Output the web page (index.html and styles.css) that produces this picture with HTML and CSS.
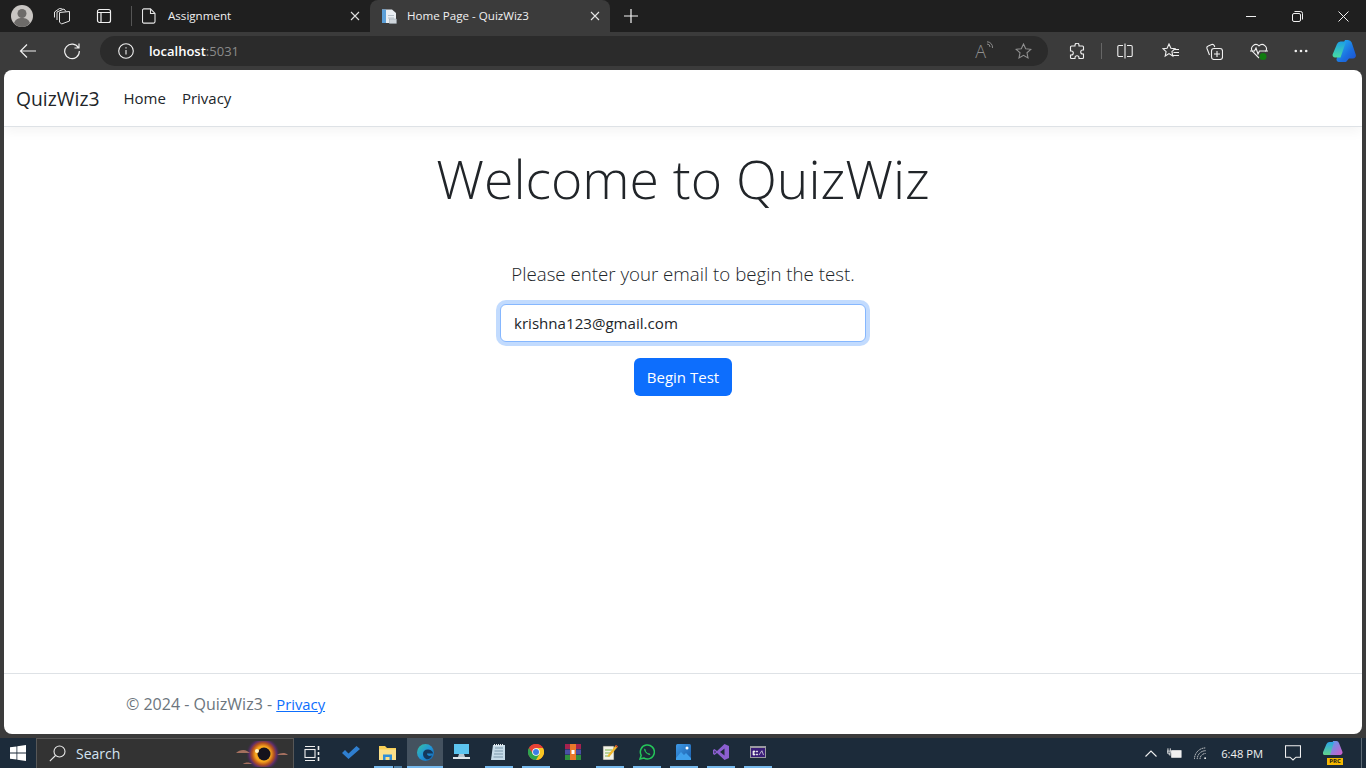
FILE: index.html
```html
<!DOCTYPE html>
<html lang="en">
  <head>
    <meta charset="UTF-8" />
    <meta name="viewport" content="width=device-width, initial-scale=1.0" />
    <title>Home Page - QuizWiz3</title>
    <link rel="stylesheet" href="styles.css">
  </head>
  <body>
    <div class="tab-strip">
      <div class="avatar">
        <svg width="22" height="22" viewBox="0 0 22 22"><circle cx="11" cy="11" r="11" fill="#c9c6c3"/><circle cx="11" cy="8.5" r="4.5" fill="#6d6b69"/><path d="M3 18c1.500-4 4.500-5 8-5s6.500 1 8 5c-2 2.500-5 4-8 4s-6-1.500-8-4z" fill="#6d6b69"/></svg>
      </div>
      <div class="strip-icon workspace">
        <svg width="18" height="18" viewBox="0 0 18 18" fill="none" stroke="#e6e6e6"><path d="M6.500 5.500l10-1v9.500l-8 3-2-2zM4 13V5l7-3 2 2.500M1.500 10.500V5l5-3.500 3 .5"/></svg>
      </div>
      <div class="strip-icon tab-actions">
        <svg width="16" height="16" viewBox="0 0 16 16" fill="none" stroke="#f0f0f0" stroke-width="1.200"><rect x="1.500" y="1.500" width="13" height="13" rx="2"/><path d="M1.500 4.500h13M5 4.500v10" /></svg>
      </div>
      <div class="strip-divider"></div>
      <div class="tab">
        <svg class="tab-page" width="14" height="16" viewBox="0 0 14 16" fill="none" stroke="#e6e6e6" stroke-width="1.100"><path d="M1.500.9h7l4.500 4.500v8.200a1.500 1.500 0 0 1-1.500 1.500h-10a1.500 1.500 0 0 1-1-1.500V2.400A1.500 1.500 0 0 1 1.500.9zM8.500 1v4.500H13"/></svg>
        <span class="tab-title">Assignment</span>
        <svg class="tab-close" width="10" height="10" viewBox="0 0 10 10" stroke="#e0e0e0" stroke-width="1.100"><path d="M1 1l8 8M9 1l-8 8"/></svg>
      </div>
      <div class="tab tab-active">
        <svg class="tab-fav" width="16" height="16" viewBox="0 0 16 16"><path d="M1 1.500h10l4 3.500v10H1z" fill="#e9eef3"/><path d="M1 1.500h4v13.500H1z" fill="#5b9fd8"/><path d="M7 7h6v1H7zM7 9.500h6v1H7z" fill="#b5c0ca"/><rect x="8.500" y="11" width="7" height="4.500" fill="#cfd6dc" stroke="#98a2ab" stroke-width=".5"/></svg>
        <span class="tab-title">Home Page - QuizWiz3</span>
        <svg class="tab-close" width="10" height="10" viewBox="0 0 10 10" stroke="#e6e6e6" stroke-width="1.100"><path d="M1 1l8 8M9 1l-8 8"/></svg>
      </div>
      <div class="new-tab">
        <svg width="14" height="14" viewBox="0 0 14 14" stroke="#f5f5f5" stroke-width="1.200"><path d="M7 0v14M0 7h14"/></svg>
      </div>
      <div class="window-controls">
        <div class="window-btn"><svg width="10" height="10" viewBox="0 0 10 10" stroke="#f0f0f0"><path d="M0 5.500h10"/></svg></div>
        <div class="window-btn"><svg width="11" height="11" viewBox="0 0 11 11" fill="none" stroke="#f0f0f0"><rect x=".5" y="2.500" width="8" height="8" rx="1.500"/><path d="M2.500 .5h6a2 2 0 0 1 2 2v6"/></svg></div>
        <div class="window-btn"><svg width="11" height="11" viewBox="0 0 11 11" stroke="#f0f0f0"><path d="M.5 .5l10 10M10.500 .5l-10 10"/></svg></div>
      </div>
    </div>

    <div class="toolbar">
      <div class="tool back">
        <svg width="18" height="16" viewBox="0 0 18 16" fill="none" stroke="#f0f0f0" stroke-width="1.200"><path d="M17 8H1.500M8 1.500L1.500 8 8 14.500"/></svg>
      </div>
      <div class="tool reload">
        <svg width="18" height="18" viewBox="0 0 18 18" fill="none" stroke="#f0f0f0" stroke-width="1.200"><path d="M15.500 6A7.300 7.300 0 1 0 16.300 9M16 1.500V6h-4.500"/></svg>
      </div>
      <div class="address-bar">
        <svg class="info-icon" width="16" height="16" viewBox="0 0 16 16" fill="none" stroke="#f0f0f0" stroke-width="1.100"><circle cx="8" cy="8" r="7.300"/><path d="M8 7v4.500M8 4.300v1.200"/></svg>
        <span class="url">localhost<span class="url-port">:5031</span></span>
        <span class="read-aloud">A<svg width="8" height="10" viewBox="0 0 8 10" fill="none" stroke="#8a8a8a"><path d="M1 3a3 3 0 0 1 3 3M1 .8A5.500 5.500 0 0 1 6.500 7"/></svg></span>
        <svg class="fav-star" width="17" height="16" viewBox="0 0 17 16" fill="none" stroke="#8f8f8f" stroke-width="1.100"><path d="M8.500 1l2.200 4.700 5.100.6-3.800 3.500 1 5.100-4.500-2.600-4.500 2.600 1-5.100L1.200 6.300l5.100-.6z"/></svg>
      </div>
      <div class="tool puzzle">
        <svg width="16" height="17" viewBox="0 0 16 17" fill="none" stroke="#f0f0f0" stroke-width="1.100"><path d="M6 2.200a2 2 0 0 1 4 0V3h3.500a1 1 0 0 1 1 1v3h-.8a2 2 0 0 0 0 4h.8v3.500a1 1 0 0 1-1 1H10v-.8a2 2 0 0 0-4 0v.8H2.500a1 1 0 0 1-1-1V12h.8a2 2 0 0 0 0-4h-.8V4a1 1 0 0 1 1-1H6z"/></svg>
      </div>
      <div class="tool-divider"></div>
      <div class="tool split">
        <svg width="16" height="16" viewBox="0 0 16 16" fill="none" stroke="#f0f0f0" stroke-width="1.100"><path d="M6 2.500H2a1.200 1.200 0 0 0-1.200 1.200v8.600A1.200 1.200 0 0 0 2 13.500h4M10 2.500h4a1.200 1.200 0 0 1 1.200 1.200v8.600a1.200 1.200 0 0 1-1.200 1.200h-4M8 .5v15"/></svg>
      </div>
      <div class="tool favs">
        <svg width="18" height="16" viewBox="0 0 18 16" fill="none" stroke="#f0f0f0" stroke-width="1.100"><path d="M7 1l1.900 4.300 4.100.4-3.100 2.900.9 4.400L7 10.600l-3.800 2.400.9-4.400L1 5.700l4.100-.4zM12 6.500h5M11.500 9.500h5.500M11 12.500h6"/></svg>
      </div>
      <div class="tool collections">
        <svg width="17" height="17" viewBox="0 0 17 17" fill="none" stroke="#f0f0f0" stroke-width="1.100"><path d="M3.500 12L1 5.500A2 2 0 0 1 2.200 3l3.500-1.500a2 2 0 0 1 2.500 1L8.800 4"/><rect x="5.500" y="5.500" width="11" height="11" rx="2.500"/><path d="M11 8v6M8 11h6"/></svg>
      </div>
      <div class="tool health">
        <svg width="18" height="17" viewBox="0 0 18 17"><path d="M9 15L2.500 8.500a4.300 4.300 0 0 1 6.500-5.600 4.300 4.300 0 0 1 6.500 5.600" fill="none" stroke="#f0f0f0" stroke-width="1.100"/><path d="M0 8h4.500l1.500-3 2 6 1.500-3h8.500" fill="none" stroke="#f0f0f0" stroke-width="1.100"/><circle cx="13" cy="13.500" r="3.500" fill="#107c10"/></svg>
      </div>
      <div class="tool more">
        <svg width="14" height="4" viewBox="0 0 14 4" fill="#f0f0f0"><circle cx="1.800" cy="2" r="1.300"/><circle cx="7" cy="2" r="1.300"/><circle cx="12.200" cy="2" r="1.300"/></svg>
      </div>
      <div class="tool copilot">
        <svg width="24" height="24" viewBox="0 0 24 24"><defs><linearGradient id="cpa" x1="0" y1="0" x2="0" y2="1"><stop offset="0" stop-color="#1c9fe6"/><stop offset="1" stop-color="#48dca0"/></linearGradient><linearGradient id="cpb" x1="0" y1="0" x2="1" y2="1"><stop offset="0" stop-color="#27bdf2"/><stop offset=".6" stop-color="#1b6fe0"/><stop offset="1" stop-color="#1d4fd0"/></linearGradient></defs><path d="M13 1h3a4 4 0 0 1 3.700 2.600l4 12a3 3 0 0 1-2.800 4H17l-3 3.400H7a2.500 2.500 0 0 1-2.300-3.400z" fill="url(#cpb)"/><path d="M9 2.500h5L8.500 18.500H3a2.500 2.500 0 0 1-2.300-3.300L5 5a4 4 0 0 1 4-2.500z" fill="url(#cpa)"/></svg>
      </div>
    </div>

    <div class="page">
      <header class="navbar">
        <a class="brand" href="#">QuizWiz3</a>
        <ul class="nav-links">
          <li><a href="#">Home</a></li>
          <li><a href="#">Privacy</a></li>
        </ul>
      </header>

      <main class="main-content">
        <h1 class="welcome">Welcome to QuizWiz</h1>
        <p class="lead">Please enter your email to begin the test.</p>
        <input class="email-input" type="email" value="krishna123@gmail.com" />
        <button class="begin-btn">Begin Test</button>
      </main>

      <footer class="footer">
        <div class="footer-inner">© 2024 - QuizWiz3 - <a href="#">Privacy</a></div>
      </footer>
    </div>

    <div class="taskbar">
      <div class="start">
        <svg width="16" height="16" viewBox="0 0 16 16" fill="#fff"><path d="M0 2.300l6.500-.9v6.200H0zM7.300 1.300L16 0v7.600H7.300zM0 8.400h6.500v6.200L0 13.700zM7.300 8.400H16V16l-8.700-1.300z"/></svg>
      </div>
      <div class="search-box">
        <svg width="17" height="17" viewBox="0 0 17 17" fill="none" stroke="#e8e8e8" stroke-width="1.100"><circle cx="10.500" cy="6.500" r="5.500"/><path d="M6.500 10.500L.8 16.200"/></svg>
        <span class="search-text">Search</span>
        <svg class="eclipse" width="54" height="26" viewBox="0 0 54 26"><defs><radialGradient id="glow"><stop offset=".45" stop-color="#f7a51c"/><stop offset=".65" stop-color="#b3501f"/><stop offset=".8" stop-color="#5d2f6a"/><stop offset="1" stop-color="#3a2a44" stop-opacity="0"/></radialGradient></defs><circle cx="28" cy="13" r="17" fill="url(#glow)"/><circle cx="29" cy="13" r="6.500" fill="#15121c"/><circle cx="22" cy="10" r="2" fill="#fff3c4"/><path d="M1 12c3-3 8-4 11-2l3 2zM42 14c3-2 8-3 11 0zM8 23c2-2 7-2 9 0z" fill="#a5705f"/></svg>
      </div>
      <div class="task-view">
        <svg width="16" height="17" viewBox="0 0 16 17" fill="none" stroke="#f0f0f0" stroke-width="1.100"><path d="M1 1.500h10M1 15.500h10"/><rect x="1" y="4.500" width="10" height="8"/><path d="M14.500 1v4M14.500 7v3M14.500 12v4" stroke-width="1.600"/></svg>
      </div>
      <div class="task-apps">
        <div class="app">
          <svg width="18" height="13" viewBox="0 0 18 13"><path d="M0 7l3-3 3.500 3.500L14.500 0 18 3 6.500 13z" fill="#2f7fd0"/></svg>
        </div>
        <div class="app app-folder">
          <svg width="17" height="15" viewBox="0 0 17 15"><path d="M0 1h6l2 2h9v12H0z" fill="#f8cf56"/><path d="M0 4.500h17V15H0z" fill="#fbe08a"/><path d="M4 9.500h9V15h-2.500v-3h-4v3H4z" fill="#2f8fd8"/></svg>
        </div>
        <div class="app app-edge">
          <svg width="17" height="17" viewBox="0 0 17 17"><defs><linearGradient id="edg" x1="0" y1="0" x2="1" y2="1"><stop offset="0" stop-color="#36c3a0"/><stop offset=".5" stop-color="#2296d8"/><stop offset="1" stop-color="#0f5fb0"/></linearGradient></defs><circle cx="8.500" cy="8.500" r="8.500" fill="url(#edg)"/><path d="M6 10c0-3 2-4.500 4.500-4.500S16 7 16 9.500h-6c0 2 2 3 5 2-1 3-4 4.500-6 3.500-2-1-3-3-3-5z" fill="#15385c"/></svg>
        </div>
        <div class="app app-bare">
          <svg width="17" height="16" viewBox="0 0 17 16"><rect x="1" y="0" width="15" height="10" fill="#5cc4ef"/><path d="M6 10h5l1 3H5z" fill="#b8c6d0"/><rect y="13" width="17" height="2" fill="#dfe7ec"/></svg>
        </div>
        <div class="app">
          <svg width="15" height="17" viewBox="0 0 15 17"><path d="M2 1h12v15H0z" fill="#c6dbe8"/><path d="M4 4h8M3.500 7h8.500M3 10h9M2.500 13h9.500" stroke="#7b97aa"/><path d="M3 1h10" stroke="#e8eef2" stroke-dasharray="1 1" stroke-width="2"/></svg>
        </div>
        <div class="app">
          <svg width="16" height="16" viewBox="0 0 16 16"><circle cx="8" cy="8" r="8" fill="#e64135"/><path d="M8 8L15 4A8 8 0 0 0 1 4z" fill="#e64135"/><path d="M8 16a8 8 0 0 0 7-12H8l-3 5z" fill="#f9c622"/><path d="M1 4a8 8 0 0 0 7 12l3.500-6H5z" fill="#2ea44f"/><circle cx="8" cy="8" r="3.800" fill="#fff"/><circle cx="8" cy="8" r="3" fill="#3d7de6"/></svg>
        </div>
        <div class="app app-bare">
          <svg width="16" height="16" viewBox="0 0 16 16"><rect width="16" height="5" fill="#a5224e"/><rect y="5.500" width="16" height="5" fill="#4a4fa5"/><rect y="11" width="16" height="5" fill="#2f8f3e"/><rect x="5" width="6" height="16" fill="#e9792a"/><rect x="6.500" y="6" width="3" height="4" fill="#fff"/></svg>
        </div>
        <div class="app">
          <svg width="16" height="16" viewBox="0 0 16 16"><path d="M1 2h11v14H1z" fill="#f2f2e6" stroke="#444" stroke-width=".6"/><path d="M3 6h7M3 9h7M3 12h5" stroke="#7bb24a"/><path d="M6 11L14 1l2 1.500L8 12l-2.500 1z" fill="#f1b72b"/><path d="M14 1l2 1.500-1 1-2-1.500z" fill="#b8332c"/></svg>
        </div>
        <div class="app">
          <svg width="16" height="16" viewBox="0 0 16 16" fill="none"><path d="M1 15l1.200-3.700A7 7 0 1 1 4.800 14z" stroke="#25c65a" stroke-width="1.500"/><path d="M5.500 4.500c-1 1 0 3 1.500 4.500s3.500 2.500 4.500 1.500l-1.500-1.500-1 .5-2.500-2.500.5-1z" fill="#25c65a"/></svg>
        </div>
        <div class="app">
          <svg width="15" height="16" viewBox="0 0 15 16"><defs><linearGradient id="pho" x1="0" y1="0" x2="1" y2="1"><stop offset="0" stop-color="#3e9ae8"/><stop offset="1" stop-color="#1a5ca8"/></linearGradient></defs><rect width="15" height="16" rx="1.500" fill="url(#pho)"/><path d="M0 14l5-6 3 3 2-2 5 5v2H0z" fill="#3fa0ec"/><circle cx="11" cy="4" r="1.500" fill="#fff"/></svg>
        </div>
        <div class="app">
          <svg width="16" height="16" viewBox="0 0 16 16"><path d="M11.500 0L16 2v12l-4.500 2L4 9 1.500 11 0 10V6l1.500-1L4 7z" fill="#8b5fd0"/><path d="M11.500 4.500L7 8l4.500 3.500z" fill="#1f2b3a"/><path d="M1.500 6.500V9.500L3 8z" fill="#1f2b3a"/></svg>
        </div>
        <div class="app">
          <svg width="16" height="12" viewBox="0 0 16 12"><rect width="16" height="12" fill="#9a9aa0"/><rect x="1" y="2" width="14" height="9" fill="#3a1d78"/><path d="M3 5h2v1H3.800v2H5v1H3zM6.500 5h1v1h-1zM6.500 8h1v1h-1zM9 9l3-4.500M12 5l1.500 4" stroke="#f0f0f0" stroke-width=".7" fill="#f0f0f0"/></svg>
        </div>
      </div>
      <div class="tray">
        <svg class="tray-chevron" width="12" height="7" viewBox="0 0 12 7" fill="none" stroke="#f0f0f0" stroke-width="1.100"><path d="M.5 6.500L6 1l5.500 5.500"/></svg>
        <svg class="tray-battery" width="15" height="11" viewBox="0 0 16 11" fill="none" stroke="#f0f0f0"><path d="M1 0v3M3.500 0v3M0 3h4.500v2H0zM2.300 5v2H4"/><rect x="5" y="2.500" width="10" height="7" fill="#f0f0f0"/></svg>
        <svg class="tray-wifi" width="13" height="13" viewBox="0 0 14 13" fill="none" stroke="#dcdcdc"><path d="M.5 12.500A12 12 0 0 1 12.500 .5M3.500 12.500a9 9 0 0 1 9-9M6.500 12.500a6 6 0 0 1 6-6" stroke-dasharray="1.500 .6"/><circle cx="12" cy="11.500" r="1" fill="#f0f0f0" stroke="none"/></svg>
        <span class="clock">6:48 PM</span>
        <svg class="tray-notify" width="16" height="16" viewBox="0 0 16 16" fill="none" stroke="#f0f0f0" stroke-width="1.100"><path d="M.5 .8h15v11.400h-4.500L8 15l-3-2.800H.5z"/></svg>
        <div class="tray-copilot">
          <svg width="20" height="17" viewBox="0 0 20 17"><defs><linearGradient id="tca" x1="0" y1="0" x2="0" y2="1"><stop offset="0" stop-color="#2aa3e8"/><stop offset="1" stop-color="#63d48a"/></linearGradient><linearGradient id="tcb" x1="0" y1="0" x2="1" y2="1"><stop offset="0" stop-color="#4ca3f0"/><stop offset="1" stop-color="#d45ac8"/></linearGradient></defs><path d="M10 0h3a3 3 0 0 1 3 2l3.500 9a2.500 2.500 0 0 1-2.500 3H6z" fill="url(#tcb)"/><path d="M7 1h4L7 14H2a2 2 0 0 1-2-2.800L3.500 3A3.500 3.500 0 0 1 7 1z" fill="url(#tca)"/></svg>
          <span class="prc-badge">PRC</span>
        </div>
      </div>
    </div>
  </body>
</html>
```

FILE: styles.css
```css
* {
  box-sizing: border-box;
}

body {
  margin: 0;
  height: 768px;
  display: flex;
  flex-direction: column;
  overflow: hidden;
  background-color: #3b3b3b;
  font-family: "Open Sans", "Noto Sans", sans-serif;
}

svg {
  display: block;
  flex: none;
}

/* browser tab row */
.tab-strip {
  display: flex;
  align-items: flex-start;
  height: 32px;
  flex: none;
  background-color: #1f1f1f;
  color: #f0f0f0;
  font-size: 11.6px;
}

.avatar {
  margin: 5px 0 0 11px;
}

.strip-icon {
  height: 32px;
  display: flex;
  align-items: center;
}

.workspace {
  margin-left: 20px;
}

.tab-actions {
  margin-left: 25px;
}

.strip-divider {
  width: 1px;
  height: 20px;
  margin: 6px 0 0 19px;
  background-color: #555;
}

.tab {
  display: flex;
  align-items: center;
  width: 228px;
  height: 32px;
  margin-left: 10px;
}

.tab-page {
  margin-right: 12px;
}

.tab-title {
  flex: 1;
  padding-bottom: 1px;
  white-space: nowrap;
}

.tab-close {
  margin-right: 10px;
}

.tab-active {
  width: 240px;
  height: 36px;
  margin-left: 0;
  padding: 0 10px 4px 11px;
  border-radius: 8px 8px 0 0;
  background-color: #3b3b3b;
}

.tab-active .tab-close {
  margin-right: 0;
}

.tab-fav {
  margin-right: 10px;
}

.new-tab {
  margin: 9px 0 0 14px;
}

.window-controls {
  display: flex;
  margin-left: auto;
}

.window-btn {
  width: 46px;
  height: 32px;
  display: flex;
  align-items: center;
  justify-content: center;
}

/* address row */
.toolbar {
  display: flex;
  align-items: flex-start;
  height: 38px;
  padding-top: 4px;
  flex: none;
}

.tool {
  display: flex;
  align-items: center;
  justify-content: center;
  width: 24px;
  height: 30px;
}

.back {
  margin-left: 16px;
}

.reload {
  margin-left: 20px;
}

.address-bar {
  display: flex;
  align-items: center;
  width: 948px;
  height: 30px;
  margin-left: 16px;
  padding: 0 16px 0 18px;
  border-radius: 15px;
  background-color: #2b2b2b;
  color: #fff;
}

.info-icon {
  margin-right: 15px;
}

.url {
  flex: 1;
  font-size: 13px;
  font-weight: 600;
}

.url-port {
  color: #8a8a8a;
  font-weight: 400;
}

.read-aloud {
  display: flex;
  align-items: flex-start;
  margin-right: 21px;
  color: #8f8f8f;
  font-size: 18px;
  font-weight: 300;
  line-height: 20px;
}

.puzzle {
  margin-left: 17px;
}

.tool-divider {
  width: 1px;
  height: 16px;
  margin: 7px 0 0 12px;
  background-color: #666;
}

.split {
  margin-left: 11px;
}

.favs {
  margin-left: 22px;
}

.collections {
  margin-left: 19px;
}

.health {
  margin-left: 21px;
}

.more {
  margin-left: 18px;
}

.copilot {
  margin-left: 19px;
}

/* web page */
.page {
  flex: 1;
  display: flex;
  flex-direction: column;
  margin: 0 4px 4px;
  border-radius: 8px;
  background-color: #fff;
  color: #212529;
  overflow: hidden;
}

.navbar {
  display: flex;
  align-items: center;
  height: 57px;
  flex: none;
  padding: 0 12px;
  border-bottom: 1px solid #dee2e6;
  box-shadow: 0 .25rem .75rem rgba(0, 0, 0, .05);
}

.brand {
  margin-right: 16px;
  color: #212529;
  font-size: 19.3px;
  text-decoration: none;
}

.nav-links {
  display: flex;
  margin: 0;
  padding: 0;
  list-style: none;
}

.nav-links a {
  display: block;
  padding: 8px;
  color: #212529;
  font-size: 15px;
  text-decoration: none;
}

.main-content {
  flex: 1;
  display: flex;
  flex-direction: column;
  align-items: center;
  padding-top: 18px;
}

.welcome {
  margin: 0 0 47px;
  font-size: 53.5px;
  font-weight: 300;
  line-height: 67px;
}

.lead {
  margin: 0 0 15px;
  font-size: 18.7px;
  font-weight: 300;
  line-height: 30px;
}

.email-input {
  width: 366px;
  height: 38px;
  margin-bottom: 16px;
  padding: 6px 13px;
  border: 1px solid #86b7fe;
  border-radius: 6px;
  outline: none;
  box-shadow: 0 0 0 .25rem rgba(13, 110, 253, .25);
  color: #212529;
  font-family: inherit;
  font-size: 15.1px;
}

.begin-btn {
  width: 98px;
  height: 38px;
  border: none;
  border-radius: 6px;
  background-color: #0d6efd;
  color: #fff;
  font-family: inherit;
  font-size: 15px;
  cursor: pointer;
}

.footer {
  height: 61px;
  flex: none;
  border-top: 1px solid #dee2e6;
  color: #6c757d;
  font-size: 16px;
  line-height: 60px;
}

.footer-inner {
  width: 1114px;
  margin: 0 auto;
}

.footer a {
  color: #0d6efd;
  font-size: 14.8px;
}

/* windows taskbar */
.taskbar {
  display: flex;
  align-items: stretch;
  height: 30px;
  flex: none;
  background-color: #1c2b3a;
  color: #f0f0f0;
}

.start {
  width: 36px;
  display: flex;
  align-items: center;
  justify-content: center;
}

.search-box {
  display: flex;
  align-items: center;
  width: 258px;
  padding: 0 4px 0 12px;
  border: 1px solid #575757;
  border-bottom: none;
  background-color: #333;
}

.search-text {
  flex: 1;
  margin-left: 10px;
  color: #d4e4f2;
  font-size: 14px;
}

.task-view {
  width: 38px;
  padding-right: 2px;
  display: flex;
  align-items: center;
  justify-content: center;
}

.task-apps {
  display: flex;
}

.app {
  position: relative;
  width: 37px;
  display: flex;
  align-items: center;
  justify-content: center;
  padding-bottom: 2px;
}

.app::after {
  content: "";
  position: absolute;
  left: 5px;
  right: 4px;
  bottom: 0;
  height: 2px;
  background-color: #76b9ed;
}

.app:first-child::after,
.app-bare::after {
  display: none;
}

.app-folder::after {
  right: 13px;
}

.app-folder::before {
  content: "";
  position: absolute;
  left: 25px;
  right: 4px;
  bottom: 0;
  height: 2px;
  background-color: #4d7fa5;
}

.app-edge {
  width: 36px;
  margin-left: 1px;
  background-color: #44525f;
}

.app-edge::after {
  left: 0;
  right: 0;
}

.tray {
  display: flex;
  align-items: center;
  margin-left: auto;
  padding-right: 18px;
  border-right: 1px solid #5d6a75;
  margin-right: 4px;
}

.tray-chevron {
  margin-right: 10px;
}

.tray-battery {
  margin-right: 12px;
}

.tray-wifi {
  margin-right: 14px;
}

.clock {
  font-size: 11.2px;
  margin-right: 22px;
  white-space: nowrap;
}

.tray-notify {
  margin-right: 22px;
}

.tray-copilot {
  position: relative;
  width: 20px;
  height: 24px;
}

.prc-badge {
  position: absolute;
  left: 4px;
  bottom: 0;
  width: 16px;
  height: 7px;
  background-color: #f5b800;
  color: #1a1a1a;
  font-size: 6px;
  font-weight: 700;
  line-height: 7px;
  text-align: center;
}
```
